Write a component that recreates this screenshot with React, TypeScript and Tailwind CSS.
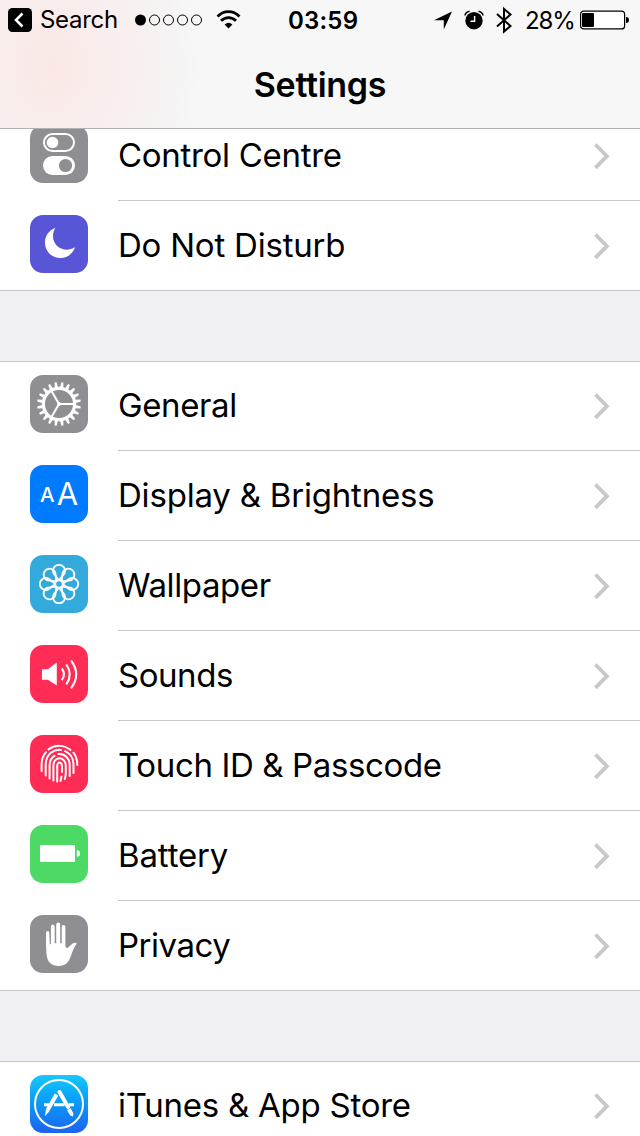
import type React from "react"

interface SettingsItem {
  name: string
  icon: React.ComponentType
  color: string
  tracking: string
}

const ControlCentreIcon = () => (
  <svg viewBox="0 0 58 58" className="size-full" fill="none">
    <rect x="14" y="9" width="30" height="17" rx="8.5" stroke="#fff" strokeWidth="2" />
    <circle cx="22.5" cy="17.5" r="5.8" fill="#fff" />
    <rect x="13" y="31" width="32" height="19" rx="9.5" fill="#fff" />
    <circle cx="35.5" cy="40.5" r="6.6" fill="#8e8e93" />
  </svg>
)

const MoonIcon = () => (
  <svg viewBox="0 0 58 58" className="size-full" fill="#fff">
    <path d="M25.5 12.8C18.5 15.5 15 21 15 27.5 15 36.5 22 43 30.5 43 37.5 43 43 38.5 45 32.3 42.5 34 39.5 34.7 36.8 34.7 29 34.7 23 28.8 23 21.3 23 18 24 15 25.5 12.8Z" />
  </svg>
)

const GearIcon = () => (
  <svg viewBox="0 0 58 58" className="size-full" fill="none" stroke="#fff">
    <circle cx="29" cy="29" r="15.6" strokeWidth="3.2" />
    {Array.from({ length: 20 }, (_, i) => (
      <path
        key={i}
        d="M27.1 13.5L28 7.1H30L30.9 13.5Z"
        fill="#fff"
        stroke="none"
        transform={`rotate(${i * 18 + 9} 29 29)`}
      />
    ))}
    <path d="M29 29H44M29 29L21.5 16M29 29L21.5 42" strokeWidth="2.1" />
    <circle cx="29" cy="29" r="2" fill="#fff" stroke="none" />
  </svg>
)

const DisplayIcon = () => (
  <svg viewBox="0 0 58 58" className="size-full font-[Inter]" fill="#fff" textAnchor="middle">
    <text x="17.2" y="37" fontSize="20.5" fontWeight="500">
      A
    </text>
    <text x="37.5" y="39.7" fontSize="31">
      A
    </text>
  </svg>
)

const WallpaperIcon = () => (
  <svg viewBox="0 0 58 58" className="size-full" fill="none" stroke="#fff" strokeWidth="1.8">
    <circle cx="29" cy="29" r="3.7" />
    {Array.from({ length: 8 }, (_, i) => (
      <path
        key={i}
        d="M29 25.3L23.6 18.4A6 6 0 1 1 34.4 18.4L29 25.3"
        transform={`rotate(${i * 45} 29 29)`}
      />
    ))}
  </svg>
)

const SoundsIcon = () => (
  <svg viewBox="0 0 58 58" className="size-full" fill="none" stroke="#fff" strokeWidth="2.1">
    <path d="M12 24.3H17.8L26.8 17.5V40.5L17.8 34.7H12Z" fill="#fff" stroke="none" />
    <path d="M31.8 23.5Q36.2 29.3 31.8 35.2M36.3 19.5Q43.3 29.3 36.3 39.3M41 15.5Q51.5 29.3 41 43.3" />
  </svg>
)

const TouchIdIcon = () => (
  <svg viewBox="0 0 58 58" className="size-full" fill="none" stroke="#fff" strokeWidth="2" strokeLinecap="round">
    <path d="M18.5 14.4C25.5 9.5 34 9.7 40.5 15" />
    <path d="M11.6 36V30C11.6 24.5 13.5 20 16 17.2M43.5 17.7C46 21 47.3 25 47.3 30" />
    <path d="M15.7 40.5V30C15.7 18 24.5 14.2 31 14.9M35 16.2C40.5 18.5 43.5 23.5 43.5 30V38" />
    <path d="M19.6 43.5V31C19.6 26 21.5 22.5 24.5 20.8M28.5 19.1C35 18.6 39.7 23.5 39.7 30V41" />
    <path d="M23.4 45.5V31C23.4 20.5 35.8 21 35.8 31V38C35.8 40.5 35.3 42.5 34.8 44" />
    <path d="M27.2 46.5V31.5C27.2 26 32 26.5 32 31.5V37" />
    <path d="M31.5 41.5L30.5 46" />
  </svg>
)

const BatteryIcon = () => (
  <svg viewBox="0 0 58 58" className="size-full" fill="#fff">
    <rect x="10" y="20" width="35" height="17" />
    <path d="M46.8 25.2Q50 25.3 50 28.5Q50 31.7 46.8 31.8Z" />
  </svg>
)

const HandIcon = () => (
  <svg viewBox="0 0 58 58" className="size-full" fill="#fff">
    <path d="M16 18C16 15.2 19.3 15.2 19.3 18L19.8 29.3H20.9V12C20.9 8.6 24.7 8.6 24.7 12V28.3H26.2V10C26.2 6.7 30.2 6.7 30.2 10V28.3H31.7V12.5C31.7 9.3 35.4 9.3 35.4 12.5V30C35.4 32 36 33 37.5 33L42.6 28.5C44.5 27.2 47.6 27.3 46.3 29.3C43.5 33 42.3 37.5 40.3 42.5C38 48.3 34.5 51 28.5 51C22 51 18 47.5 17 42C16 36 16 25 16 18Z" />
  </svg>
)

const AppStoreIcon = () => (
  <svg viewBox="0 0 58 58" className="size-full" fill="none" stroke="#fff">
    <circle cx="29" cy="29" r="24" strokeWidth="2" />
    <path d="M14 29.7H19M24 29.7H34.5M38.7 29.7H44" strokeWidth="3" />
    <path d="M26.6 19.5L17.5 35.3" strokeWidth="4" />
    <path d="M29.5 17L38 32" strokeWidth="4" strokeLinecap="round" />
    <path d="M15.9 34.4L19.4 36.3L15 41.3ZM37 35.2L40.6 33.1L43.4 38.5L43 41.4L40.3 40.4Z" fill="#fff" stroke="none" />
  </svg>
)

const groups: SettingsItem[][] = [
  [
    { name: "Control Centre", icon: ControlCentreIcon, color: "bg-[#8e8e93]", tracking: "tracking-[-0.3px]" },
    { name: "Do Not Disturb", icon: MoonIcon, color: "bg-[#5856d6]", tracking: "tracking-[-0.22px]" },
  ],
  [
    { name: "General", icon: GearIcon, color: "bg-[#8e8e93]", tracking: "tracking-[-0.4px]" },
    { name: "Display & Brightness", icon: DisplayIcon, color: "bg-[#007aff]", tracking: "tracking-[-0.2px]" },
    { name: "Wallpaper", icon: WallpaperIcon, color: "bg-[#34aadc]", tracking: "tracking-[-0.4px]" },
    { name: "Sounds", icon: SoundsIcon, color: "bg-[#ff2d55]", tracking: "tracking-[-0.45px]" },
    { name: "Touch ID & Passcode", icon: TouchIdIcon, color: "bg-[#ff2d55]", tracking: "tracking-[-0.37px]" },
    { name: "Battery", icon: BatteryIcon, color: "bg-[#4cd964]", tracking: "tracking-[-0.15px]" },
    { name: "Privacy", icon: HandIcon, color: "bg-[#8e8e93]", tracking: "tracking-[-0.5px]" },
  ],
  [
    {
      name: "iTunes & App Store",
      icon: AppStoreIcon,
      color: "bg-linear-to-b from-[#18c8fb] to-[#1d62f0]",
      tracking: "tracking-[-0.25px]",
    },
  ],
]

const StatusBar: React.FC = () => (
  <div className="flex h-10 items-center pl-2 pr-[10px]">
    <div className="flex w-[280px] items-center">
      <svg viewBox="0 0 24 24" className="size-6">
        <rect width="24" height="24" rx="4.5" />
        <path d="M14.5 5.5L8 12L14.5 18.5" fill="none" stroke="#fff" strokeWidth="2.6" />
      </svg>
      <span className="ml-2 w-[78px] text-[24px] leading-10 tracking-[-0.3px]">Search</span>
      <svg viewBox="0 0 68 12" className="ml-[17px] h-3 w-[68px]" fill="none" stroke="#000">
        <circle cx="5.5" cy="6" r="5.5" fill="#000" stroke="none" />
        {[19.5, 33.5, 47.5, 61.5].map((cx) => (
          <circle key={cx} cx={cx} cy="6" r="5" />
        ))}
      </svg>
      <svg viewBox="0 0 26 20" className="ml-[13px] h-5 w-[26px]" fill="none" stroke="#000">
        <path d="M1.5 6.5C8 0 17 0 23.5 6.5" strokeWidth="2.8" />
        <path d="M5 10.8C9.5 6.5 15.5 6.5 20 10.8" strokeWidth="2.7" />
        <path d="M8.6 14.5Q12.5 11 16.4 14.5L12.5 18.5Z" fill="#000" stroke="none" />
      </svg>
    </div>
    <span className="pt-px text-[24px] font-semibold leading-10 tracking-[0.2px]">03:59</span>
    <div className="flex flex-1 items-center justify-end">
      <svg viewBox="0 0 20 20" className="h-5 w-5">
        <path d="M19 1.5L10.8 19.5V10.2H1Z" />
      </svg>
      <svg viewBox="0 0 20 20" className="ml-[11px] h-5 w-5">
        <circle cx="10" cy="10.7" r="8.7" />
        <path d="M1 5.5Q1.5 2 5.5 1.2M19 5.5Q18.5 2 14.5 1.2" fill="none" stroke="#000" strokeWidth="1.5" />
        <path d="M10.6 6V11.2H6.5" fill="none" stroke="#fff" strokeWidth="1.4" />
      </svg>
      <svg viewBox="0 0 18 28" className="ml-[11px] h-7 w-[18px]" fill="none" stroke="#000" strokeWidth="2">
        <path d="M2 8L15.5 20L9 25.5V3L15.5 8.5L2 20.5" />
      </svg>
      <span className="ml-[12px] w-[51px] whitespace-nowrap pt-px text-[24px] leading-10 tracking-[-1.1px]">28%</span>
      <svg viewBox="0 0 50 20" className="ml-1 h-5 w-[50px]">
        <rect x="0.6" y="1.1" width="44" height="17.8" rx="3" fill="#fff" stroke="#000" strokeWidth="1.2" />
        <rect x="2" y="3" width="12" height="14" rx="1" />
        <path d="M46 7Q49 7 49 10Q49 13 46 13Z" />
      </svg>
    </div>
  </div>
)

const SettingsRow: React.FC<{ item: SettingsItem; last: boolean }> = ({ item, last }) => (
  <li className="flex h-[90px] pl-[30px]">
    <div className={`mt-[14px] size-[58px] shrink-0 overflow-hidden rounded-[13px] ${item.color}`}>
      <item.icon />
    </div>
    <div
      className={`ml-[30px] flex flex-1 items-center justify-between border-b pr-[30px] ${
        last ? "border-transparent" : "border-[#c8c7cc]"
      }`}
    >
      <span className={`whitespace-nowrap pb-[2px] text-[33px] leading-[44px] ${item.tracking}`}>{item.name}</span>
      <svg viewBox="0 0 17 28" className="h-7 w-[17px]" fill="none" stroke="#c7c7cc" strokeWidth="3.8">
        <path d="M2.4 2.5L13.9 14.2L2.4 25.8" />
      </svg>
    </div>
  </li>
)

const App: React.FC = () => {
  return (
    <div className="flex h-[1136px] w-[640px] flex-col overflow-hidden bg-[#efeff4] font-[Inter,sans-serif] text-black">
      <header className="h-[129px] shrink-0 border-b border-[#b2b2b2] bg-[#f7f7f7] bg-[radial-gradient(ellipse_150px_190px_at_50px_65px,#fae8e6,#f8efee_50%,#f5f4f4_85%,#f7f7f7)]">
        <StatusBar />
        <h1 className="text-center text-[34px] font-semibold leading-[89px] tracking-[-0.3px]">Settings</h1>
      </header>

      <main className="min-h-0 flex-1 overflow-hidden">
        <div className="-mt-[18px] flex flex-col gap-[70px]">
          {groups.map((items, index) => (
            <ul
              key={index}
              className="bg-white shadow-[inset_0_1px_0_#c8c7cc,inset_0_-1px_0_#c8c7cc]"
            >
              {items.map((item, i) => (
                <SettingsRow key={item.name} item={item} last={i === items.length - 1} />
              ))}
            </ul>
          ))}
        </div>
      </main>
    </div>
  )
}

export default App
